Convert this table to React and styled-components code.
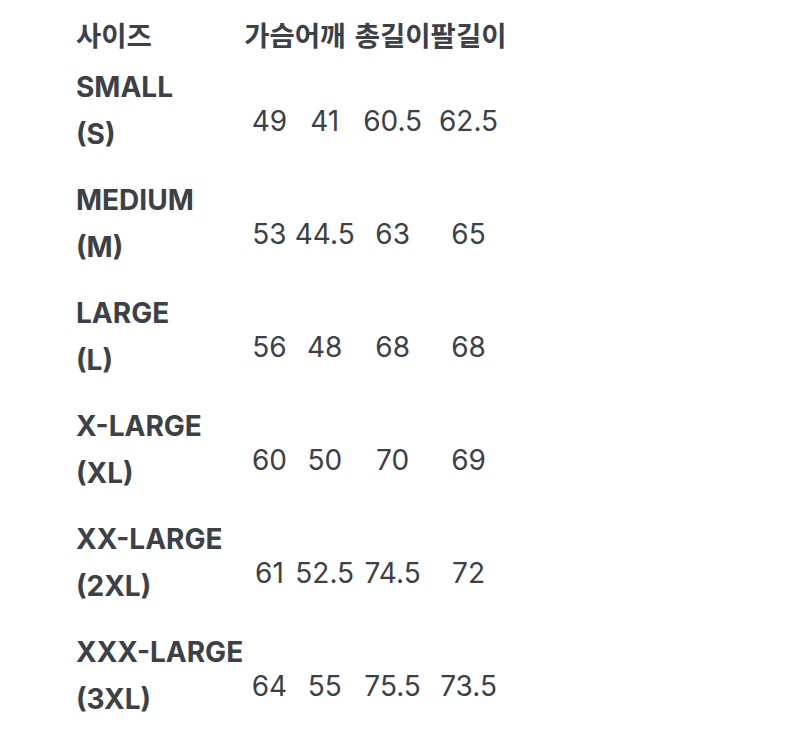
import styled, { createGlobalStyle } from "styled-components";

const GlobalStyle = createGlobalStyle`
  html, body {
    margin: 0;
    padding: 0;
    background: #fff;
  }
  body {
    font-family: Inter, "Noto Sans CJK KR", sans-serif;
    color: #3b4147;
  }
`;

const Page = styled.div`
  padding: 0 0 0 76px;
`;

const Table = styled.table`
  border-collapse: collapse;
  border-spacing: 0;
`;

const HeadCell = styled.th`
  font-family: "Noto Sans CJK KR", sans-serif;
  font-weight: 700;
  font-size: 27.5px;
  line-height: 46px;
  padding: 11px 0 7px;
  text-align: left;
  white-space: nowrap;
`;

const SizeCell = styled.td`
  font-weight: 700;
  font-size: 28px;
  line-height: 46.5px;
  vertical-align: top;
  padding: 0 1px 20px 0;
  height: 93px;
  white-space: nowrap;
`;

const ValueCell = styled.td`
  font-size: 28px;
  font-weight: 400;
  text-align: center;
  vertical-align: middle;
  padding: 0;
  white-space: nowrap;
`;

const sizes = [
  ["SMALL", "(S)", "49", "41", "60.5", "62.5"],
  ["MEDIUM", "(M)", "53", "44.5", "63", "65"],
  ["LARGE", "(L)", "56", "48", "68", "68"],
  ["X-LARGE", "(XL)", "60", "50", "70", "69"],
  ["XX-LARGE", "(2XL)", "61", "52.5", "74.5", "72"],
  ["XXX-LARGE", "(3XL)", "64", "55", "75.5", "73.5"],
];

export default function App() {
  return (
    <>
      <GlobalStyle />
      <Page>
        <Table>
          <thead>
            <tr>
              <HeadCell>사이즈</HeadCell>
              <HeadCell>가슴</HeadCell>
              <HeadCell>어깨</HeadCell>
              <HeadCell>총길이</HeadCell>
              <HeadCell>팔길이</HeadCell>
            </tr>
          </thead>
          <tbody>
            {sizes.map(([name, short, ...values]) => (
              <tr key={name}>
                <SizeCell>
                  {name}
                  <br />
                  {short}
                </SizeCell>
                {values.map((v, i) => (
                  <ValueCell key={i}>{v}</ValueCell>
                ))}
              </tr>
            ))}
          </tbody>
        </Table>
      </Page>
    </>
  );
}
